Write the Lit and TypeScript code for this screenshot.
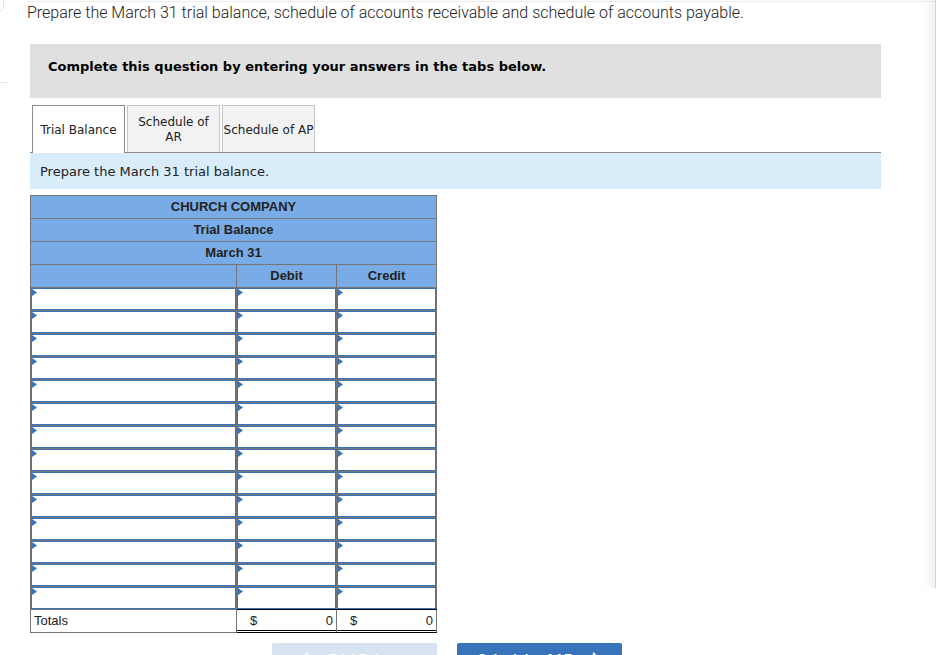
import { LitElement, html, css } from "lit";
import { customElement, state } from "lit/decorators.js";

const ACCOUNT_ROWS = 14;
const TABS = ["Trial Balance", "Schedule of\nAR", "Schedule of AP"];

@customElement("trial-balance-table")
class TrialBalanceTable extends LitElement {
  static styles = css`
    :host {
      display: block;
      font-family: "Liberation Sans", Arial, sans-serif;
      font-size: 13px;
      line-height: 18px;
      color: #222;
    }
    table {
      border-collapse: collapse;
      table-layout: fixed;
      width: 407px;
    }
    .account {
      width: 206px;
    }
    .amount {
      width: 100px;
    }
    tr {
      height: 23px;
    }
    th,
    td {
      box-sizing: border-box;
      height: 23px;
      padding: 0;
      border: 1px solid #757575;
    }
    thead th {
      background: #79ace6;
      font-weight: 700;
    }
    .entry {
      position: relative;
    }
    tr:last-child > .entry + .entry {
      border-bottom-color: #000;
    }
    .entry::after {
      content: "";
      position: absolute;
      top: 1px;
      left: 1px;
      width: 5px;
      height: 7px;
      background: #3b73b9;
      clip-path: polygon(0 0, 100% 50%, 0 100%);
      pointer-events: none;
    }
    input {
      display: block;
      box-sizing: border-box;
      width: 100%;
      height: 22px;
      margin: 0;
      padding: 0 8px;
      border: 1px solid #3b73b9;
      border-radius: 0;
      background: #fff;
      font: inherit;
      outline: none;
    }
    .label {
      padding-left: 3px;
      font-weight: 400;
      text-align: left;
    }
    .total {
      border-top-color: #000;
      border-bottom-color: #000;
      vertical-align: top;
    }
    .sum {
      display: flex;
      justify-content: space-between;
      box-sizing: border-box;
      height: 21px;
      padding: 2px 3px 0 13px;
      border-bottom: 1px solid #000;
    }
  `;

  render() {
    return html`
      <table>
        <colgroup>
          <col class="account" />
          <col class="amount" />
          <col class="amount" />
        </colgroup>
        <thead>
          <tr><th colspan="3">CHURCH COMPANY</th></tr>
          <tr><th colspan="3">Trial Balance</th></tr>
          <tr><th colspan="3">March 31</th></tr>
          <tr>
            <th></th>
            <th scope="col">Debit</th>
            <th scope="col">Credit</th>
          </tr>
        </thead>
        <tbody>
          ${Array.from({ length: ACCOUNT_ROWS }, (_, i) => html`
            <tr>
              ${["Account", "Debit", "Credit"].map((name) => html`
                <td class="entry"><input type="text" aria-label="${name} ${i + 1}" /></td>
              `)}
            </tr>
          `)}
        </tbody>
        <tfoot>
          <tr>
            <th class="label" scope="row">Totals</th>
            <td class="total"><div class="sum"><span>$</span><span>0</span></div></td>
            <td class="total"><div class="sum"><span>$</span><span>0</span></div></td>
          </tr>
        </tfoot>
      </table>
    `;
  }
}

@customElement("app-root")
class AppRoot extends LitElement {
  @state() active = 0;

  static styles = css`
    :host {
      display: block;
      height: 100vh;
      overflow: hidden;
      background: #fff;
      font-family: "DejaVu Sans", Verdana, sans-serif;
      font-size: 13px;
      color: #222;
    }
    .page {
      display: grid;
      grid-template-columns: 27px 1fr;
      position: relative;
    }
    .rail {
      display: flex;
      flex-direction: column;
    }
    .rail-card {
      box-sizing: border-box;
      width: 4px;
      height: 11px;
      border: solid #e6e6e6;
      border-width: 0 1px 1px 0;
      border-radius: 0 0 4px 0;
    }
    .rail-line {
      width: 7px;
      margin-top: 71px;
      border-top: 1px solid #e6e6e6;
    }
    .content {
      margin-top: 1px;
      border-top: 1px solid #ececec;
    }
    .prompt {
      margin: 0;
      font: 300 16px/22px Roboto, sans-serif;
      color: #222;
    }
    .question {
      margin: 20px 55px 0 3px;
    }
    .notice {
      box-sizing: border-box;
      min-height: 54px;
      padding: 14px 18px;
      background: #e0e0e0;
      font-weight: 700;
      line-height: 18px;
      color: #000;
    }
    .tabs {
      display: flex;
      gap: 2px;
      margin-top: 7px;
      padding-left: 2px;
      border-bottom: 1px solid #8c8c8c;
    }
    .tab {
      box-sizing: border-box;
      width: 93px;
      height: 47px;
      padding: 2px 0 0;
      border: 1px solid #c4c4c4;
      border-bottom: 0;
      border-radius: 0;
      background: #f2f2f2;
      font: 12px/15px "DejaVu Sans", Verdana, sans-serif;
      color: #222;
      white-space: pre-line;
    }
    .tab[aria-selected="true"] {
      height: 48px;
      margin-bottom: -1px;
      border-color: #8c8c8c;
      background: #fff;
    }
    .instruction {
      margin: 0;
      padding: 10px 10px 8px;
      background: #d9ecfa;
      line-height: 18px;
    }
    trial-balance-table {
      margin-top: 6px;
    }
    .pager {
      display: flex;
      justify-content: center;
      gap: 20px;
      margin-top: 10px;
      padding-right: 17px;
    }
    .pager button {
      display: flex;
      align-items: center;
      justify-content: center;
      gap: 18px;
      width: 165px;
      height: 32px;
      padding: 0;
      border: 0;
      border-radius: 2px;
      background: #3874ba;
      color: #fff;
      font: 700 13px/16px "Liberation Sans", Arial, sans-serif;
    }
    .pager button:disabled {
      background: #d8e3f1;
    }
    .shade {
      position: absolute;
      top: 0;
      right: 0;
      width: 12px;
      height: 588px;
      border-right: 1px solid #d4d4d4;
      box-sizing: border-box;
      background: linear-gradient(to right, #fff0, #0000000e);
    }
  `;

  render() {
    return html`
      <div class="page">
        <div class="rail">
          <div class="rail-card"></div>
          <div class="rail-line"></div>
        </div>
        <main class="content">
          <p class="prompt">
            Prepare the March 31 trial balance, schedule of accounts receivable and schedule of accounts payable.
          </p>
          <section class="question">
            <div class="notice">Complete this question by entering your answers in the tabs below.</div>
            <div class="tabs" role="tablist">
              ${TABS.map((label, i) => html`
                <button class="tab" role="tab" aria-selected=${i === this.active ? "true" : "false"}
                  @click=${() => (this.active = i)}>${label}</button>
              `)}
            </div>
            <p class="instruction">Prepare the March 31 trial balance.</p>
            <trial-balance-table></trial-balance-table>
            <div class="pager">
              <button disabled>
                <svg width="10" height="14" viewBox="0 0 10 14" fill="none" stroke="currentColor" stroke-width="2">
                  <path d="M8 1 2 7l6 6" />
                </svg>
                Trial Balance
              </button>
              <button>
                Schedule of AR
                <svg width="10" height="14" viewBox="0 0 10 14" fill="none" stroke="currentColor" stroke-width="2">
                  <path d="m2 1 6 6-6 6" />
                </svg>
              </button>
            </div>
          </section>
        </main>
        <div class="shade"></div>
      </div>
    `;
  }
}
